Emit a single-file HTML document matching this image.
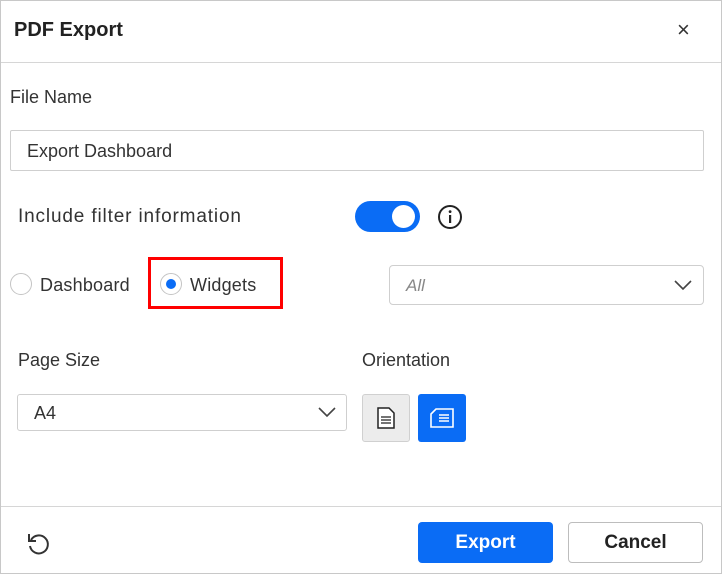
<!DOCTYPE html>
<html><head><style>
*{box-sizing:border-box;margin:0;padding:0}
body{width:722px;height:574px;background:#fff;font-family:"Liberation Sans",sans-serif;color:#333;position:relative;overflow:hidden}
.frame{position:absolute;left:0;top:0;width:722px;height:574px;border:1px solid #c8c8c8}
.abs{position:absolute}
.t{font-size:18px;color:#333}
</style></head><body>
<div class="frame"></div>
<div class="abs" style="left:14px;top:19px;font-size:20px;font-weight:bold;color:#222">PDF Export</div>
<div class="abs" style="left:677px;top:17px;font-size:22px;color:#333">×</div>
<div class="abs" style="left:1px;top:62px;width:720px;height:1px;background:#d6d6d6"></div>
<div class="abs t" style="left:10px;top:87px">File Name</div>
<div class="abs" style="left:10px;top:130px;width:694px;height:41px;border:1px solid #cfcfcf;border-radius:2px"></div>
<div class="abs t" style="left:27px;top:141px">Export Dashboard</div>
<div class="abs" style="left:18px;top:206px;font-size:19px;color:#333;letter-spacing:0.85px">Include filter information</div>
<div class="abs" style="left:355px;top:201px;width:65px;height:31px;border-radius:16px;background:#0a6cf5"></div>
<div class="abs" style="left:392px;top:205px;width:23px;height:23px;border-radius:50%;background:#fff"></div>
<svg class="abs" style="left:437px;top:204px" width="26" height="26" viewBox="0 0 26 26"><circle cx="13" cy="13" r="11" fill="none" stroke="#222" stroke-width="2"/><rect x="12" y="11" width="2.2" height="8" fill="#222"/><circle cx="13.1" cy="7.6" r="1.4" fill="#222"/></svg>
<div class="abs" style="left:10px;top:273px;width:22px;height:22px;border-radius:50%;border:1px solid #c4c4c4"></div>
<div class="abs t" style="left:40px;top:275px;letter-spacing:0.2px">Dashboard</div>
<div class="abs" style="left:148px;top:257px;width:135px;height:52px;border:3px solid #f00"></div>
<div class="abs" style="left:160px;top:273px;width:22px;height:22px;border-radius:50%;border:1px solid #c4c4c4"></div>
<div class="abs" style="left:166px;top:279px;width:10px;height:10px;border-radius:50%;background:#0a6cf5"></div>
<div class="abs t" style="left:190px;top:275px;letter-spacing:0.2px">Widgets</div>
<div class="abs" style="left:389px;top:265px;width:315px;height:40px;border:1px solid #cfcfcf;border-radius:4px"></div>
<div class="abs" style="left:406px;top:276px;font-size:17px;font-style:italic;color:#888">All</div>
<svg class="abs" style="left:674px;top:279px" width="18" height="12" viewBox="0 0 18 12"><path d="M1 2l8 8 8-8" fill="none" stroke="#444" stroke-width="1.6"/></svg>
<div class="abs t" style="left:18px;top:350px">Page Size</div>
<div class="abs t" style="left:362px;top:350px">Orientation</div>
<div class="abs" style="left:17px;top:394px;width:330px;height:37px;border:1px solid #cfcfcf;border-radius:3px"></div>
<div class="abs t" style="left:34px;top:403px">A4</div>
<svg class="abs" style="left:318px;top:406px" width="18" height="12" viewBox="0 0 18 12"><path d="M1 2l8 8 8-8" fill="none" stroke="#444" stroke-width="1.6"/></svg>
<div class="abs" style="left:362px;top:394px;width:48px;height:48px;border:1px solid #d0d0d0;border-radius:3px;background:#ececec"></div>
<svg class="abs" style="left:377px;top:407px" width="18" height="22" viewBox="0 0 18 22"><path d="M1 1h11l5 5v15H1z" fill="#fff" stroke="#222" stroke-width="1.5"/><path d="M4 10h10M4 13h10M4 16h10" stroke="#222" stroke-width="1.3"/></svg>
<div class="abs" style="left:418px;top:394px;width:48px;height:48px;border-radius:3px;background:#0a6cf5"></div>
<svg class="abs" style="left:430px;top:408px" width="24" height="20" viewBox="0 0 24 20"><path d="M6 1h17v18H1V6z" fill="none" stroke="#fff" stroke-width="1.6"/><path d="M9 7h10M9 10h10M9 13h10" stroke="#fff" stroke-width="1.4"/></svg>
<div class="abs" style="left:1px;top:506px;width:720px;height:1px;background:#d6d6d6"></div>
<svg class="abs" style="left:26px;top:531px" width="26" height="26" viewBox="0 0 26 26"><path d="M5 9A9 9 0 1 1 4 15" fill="none" stroke="#333" stroke-width="2"/><path d="M3 3v7h7" fill="none" stroke="#333" stroke-width="2"/></svg>
<div class="abs" style="left:418px;top:522px;width:135px;height:41px;border-radius:4px;background:#0a6cf5;color:#fff;font-size:19px;font-weight:bold;text-align:center;line-height:41px">Export</div>
<div class="abs" style="left:568px;top:522px;width:135px;height:41px;border-radius:4px;border:1px solid #bdbdbd;color:#222;font-size:19px;font-weight:bold;text-align:center;line-height:39px">Cancel</div>
</body></html>
